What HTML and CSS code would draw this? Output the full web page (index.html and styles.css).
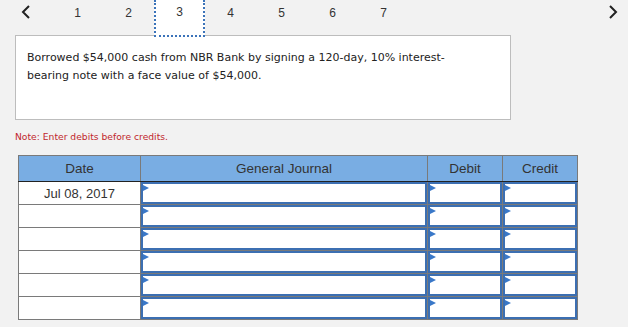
FILE: index.html
```html
<!DOCTYPE html>
<html lang="en">
<head>
    <meta charset="UTF-8">
    <title>Journal Entry</title>
    <link rel="stylesheet" href="styles.css">
</head>
<body>
    <div class="tabs">
        <span class="arrow">
            <svg width="10" height="14" viewBox="0 0 10 14"><path d="M8 1 L2 7 L8 13" fill="none" stroke="#222" stroke-width="2"/></svg>
        </span>
        <ul class="tab-list">
            <li>1</li>
            <li>2</li>
            <li class="active">3</li>
            <li>4</li>
            <li>5</li>
            <li>6</li>
            <li>7</li>
        </ul>
        <span class="arrow arrow-next">
            <svg width="10" height="14" viewBox="0 0 10 14"><path d="M2 1 L8 7 L2 13" fill="none" stroke="#222" stroke-width="2"/></svg>
        </span>
    </div>

    <div class="question">
        <p>Borrowed $54,000 cash from NBR Bank by signing a 120-day, 10% interest-bearing note with a face value of $54,000.</p>
    </div>

    <p class="note">Note: Enter debits before credits.</p>

    <table class="journal">
        <thead>
            <tr>
                <th class="col-date">Date</th>
                <th class="col-account">General Journal</th>
                <th class="col-amount">Debit</th>
                <th class="col-amount">Credit</th>
            </tr>
        </thead>
        <tbody>
            <tr>
                <td class="date">Jul 08, 2017</td>
                <td class="entry"><div class="field"></div></td>
                <td class="entry"><div class="field"></div></td>
                <td class="entry"><div class="field"></div></td>
            </tr>
            <tr>
                <td class="date"></td>
                <td class="entry"><div class="field"></div></td>
                <td class="entry"><div class="field"></div></td>
                <td class="entry"><div class="field"></div></td>
            </tr>
            <tr>
                <td class="date"></td>
                <td class="entry"><div class="field"></div></td>
                <td class="entry"><div class="field"></div></td>
                <td class="entry"><div class="field"></div></td>
            </tr>
            <tr>
                <td class="date"></td>
                <td class="entry"><div class="field"></div></td>
                <td class="entry"><div class="field"></div></td>
                <td class="entry"><div class="field"></div></td>
            </tr>
            <tr>
                <td class="date"></td>
                <td class="entry"><div class="field"></div></td>
                <td class="entry"><div class="field"></div></td>
                <td class="entry"><div class="field"></div></td>
            </tr>
            <tr>
                <td class="date"></td>
                <td class="entry"><div class="field"></div></td>
                <td class="entry"><div class="field"></div></td>
                <td class="entry"><div class="field"></div></td>
            </tr>
        </tbody>
    </table>
</body>
</html>
```

FILE: styles.css
```css
body {
    margin: 0;
    background-color: #f2f2f2;
    font-family: "Liberation Sans", Arial, sans-serif;
    color: #333333;
}
.tabs {
    display: flex;
    align-items: flex-start;
    height: 35px;
}
.arrow {
    display: flex;
    width: 52px;
    padding: 5px 0 0 21px;
    box-sizing: border-box;
}
.arrow-next {
    margin-left: auto;
    width: auto;
    padding-left: 0;
    padding-right: 10px;
}
.tab-list {
    display: flex;
    list-style: none;
    margin: 0;
    padding: 0;
    height: 35px;
}
.tab-list li {
    width: 51px;
    height: 35px;
    display: flex;
    align-items: center;
    justify-content: center;
    font-size: 12px;
    padding-bottom: 10px;
    box-sizing: border-box;
}
.tab-list li.active {
    background-color: #ffffff;
    border-left: 2px dotted #3b73b9;
    border-right: 2px dotted #3b73b9;
    border-bottom: 2px dotted #3b73b9;
    height: 37px;
    padding-bottom: 12px;
    position: relative;
    z-index: 1;
}
.question {
    margin-left: 15px;
    width: 496px;
    height: 85px;
    box-sizing: border-box;
    background-color: #ffffff;
    border: 1px solid #bdbdbd;
    padding: 13px 60px 0 11px;
}
.question p {
    margin: 0;
    font-family: "DejaVu Sans", Verdana, sans-serif;
    font-size: 11px;
    line-height: 18px;
    color: #222222;
}
.note {
    margin: 11px 0 0 15px;
    font-family: "DejaVu Sans", Verdana, sans-serif;
    font-size: 9.2px;
    color: #c1272d;
}
.journal {
    margin: 13px 0 0 18px;
    border-collapse: collapse;
    table-layout: fixed;
    width: 555px;
    background-color: #ffffff;
}
.journal th {
    background-color: #79ade3;
    font-size: 13.5px;
    font-weight: normal;
    height: 25px;
    padding: 0;
    border: 1px solid #7a7a7a;
    border-left-color: #222222;
    border-bottom-color: #222222;
}
.journal th:first-child {
    border-left-color: #7a7a7a;
}
.col-date { width: 121px; }
.col-account { width: 286px; }
.col-amount { width: 74px; }
.journal td {
    border: 1px solid #7a7a7a;
    height: 22px;
    padding: 0;
}
.journal td.date {
    text-align: center;
    font-size: 13px;
    vertical-align: middle;
}
.field {
    position: relative;
    height: 22px;
    border: 2px solid #3c6fb2;
    box-sizing: border-box;
}
.field::before {
    content: "";
    position: absolute;
    top: 1px;
    left: 0;
    border-top: 3px solid transparent;
    border-bottom: 3px solid transparent;
    border-left: 6px solid #3a78c8;
}
```
